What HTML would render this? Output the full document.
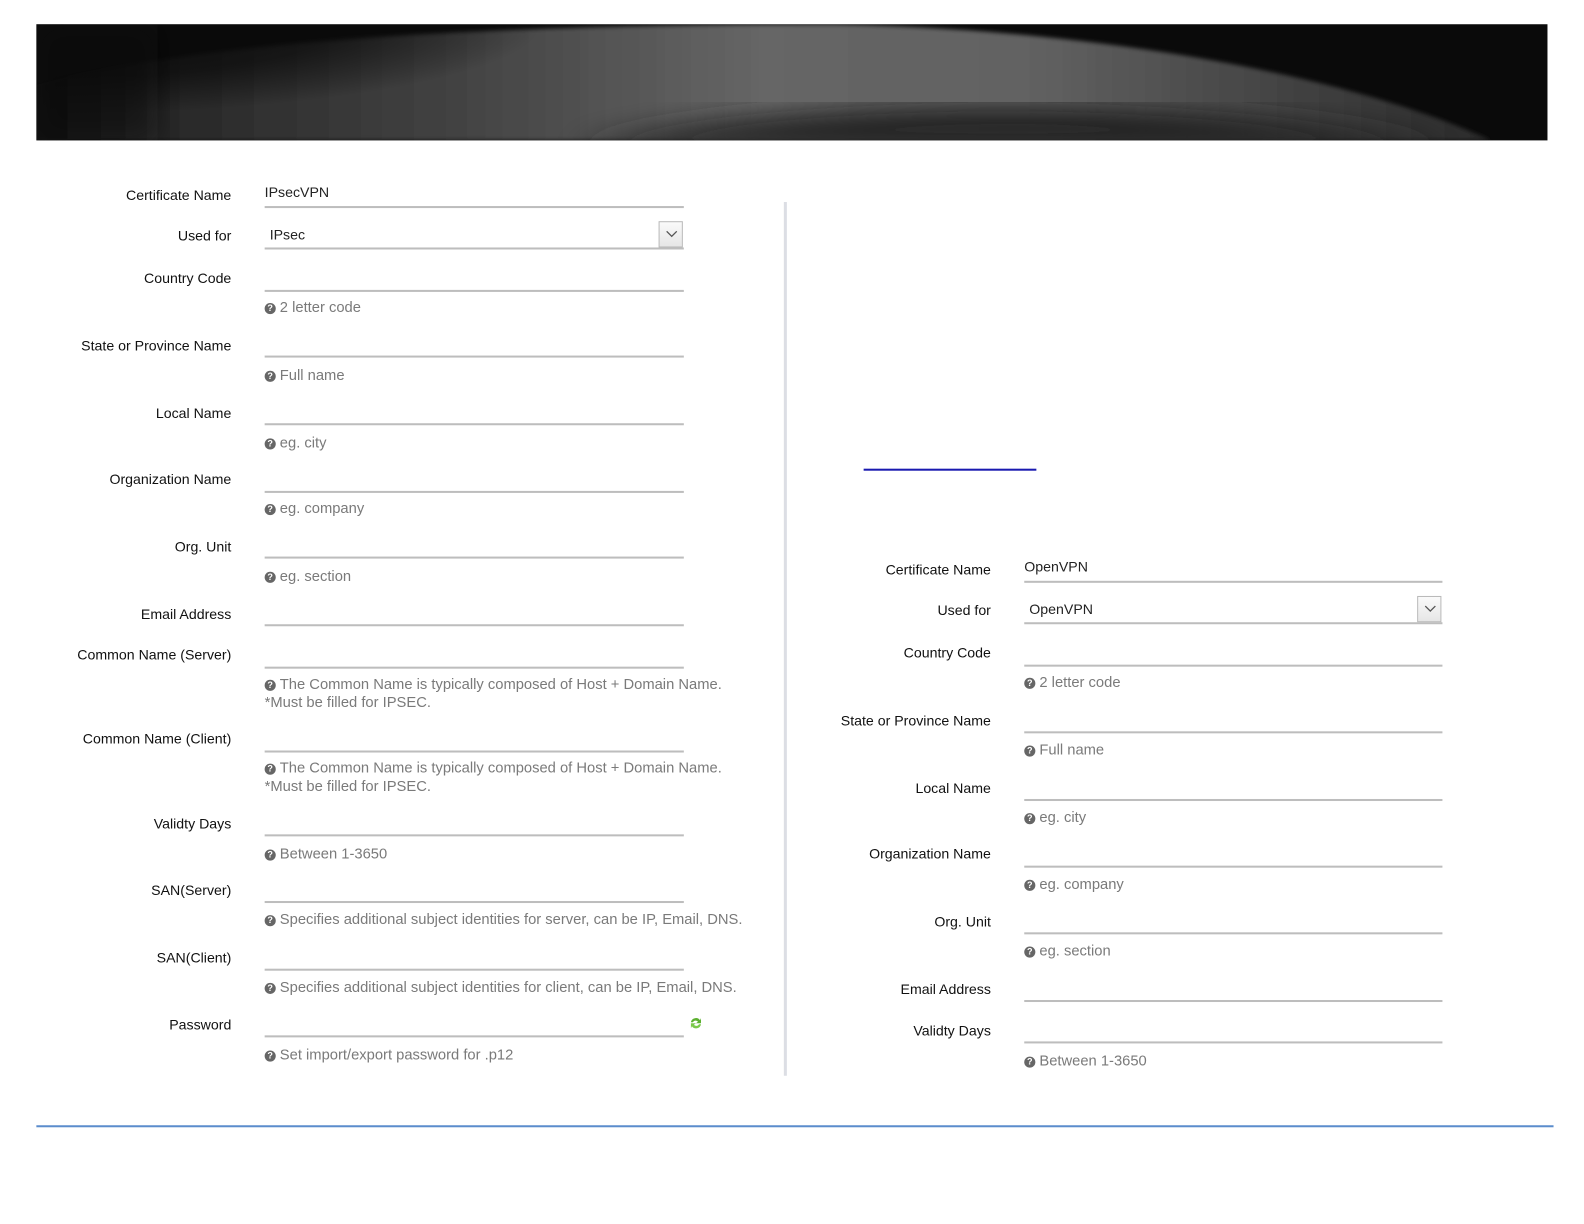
<!DOCTYPE html>
<html><head><meta charset="utf-8">
<style>
html,body{margin:0;padding:0;background:#fff;width:1584px;height:1224px;overflow:hidden}
#w{position:absolute;left:0;top:0;width:1568px;height:1212px;transform:scale(1.0101);transform-origin:0 0;font-family:"Liberation Sans",sans-serif}
.ban{position:absolute;left:36px;top:24px;width:1496px;height:115px;overflow:hidden;background:#0a0a0a}
.l{position:absolute;font-size:14px;color:#111;text-align:right;width:200px;white-space:nowrap}
.ln{position:absolute;height:1.5px;background:#bdbdbd}
.h{position:absolute;font-size:14.6px;color:#7a7a7a;white-space:nowrap;line-height:18px}
.h i{display:inline-block;width:11px;height:11px;border-radius:50%;background:#666;color:#fff;font-style:normal;font-size:9px;line-height:11px;text-align:center;font-weight:bold;margin-right:4px;vertical-align:1px}
.v{position:absolute;font-size:14px;color:#222}
.btn{position:absolute;width:24px;height:26px;border:1px solid #b8b8b8;background:linear-gradient(#fafafa,#e6e6e6);box-sizing:border-box}
.btn svg{position:absolute;left:6px;top:8px}
</style></head><body><div id="w">
<div class="ban">
<svg width="1496" height="115" style="position:absolute;left:0;top:0">
<defs>
<linearGradient id="g" x1="0" y1="0" x2="1" y2="0">
<stop offset="0" stop-color="#0a0a0a"/>
<stop offset="0.08" stop-color="#262626"/>
<stop offset="0.3" stop-color="#444"/>
<stop offset="0.5" stop-color="#666"/>
<stop offset="0.68" stop-color="#626262"/>
<stop offset="0.85" stop-color="#444"/>
<stop offset="1" stop-color="#2a2a2a"/>
</linearGradient>
<radialGradient id="tl" cx="0" cy="0" r="1" gradientUnits="userSpaceOnUse" gradientTransform="translate(0 0) scale(500 90)">
<stop offset="0" stop-color="#0a0a0a" stop-opacity="1"/>
<stop offset="0.6" stop-color="#0a0a0a" stop-opacity="0.7"/>
<stop offset="1" stop-color="#0a0a0a" stop-opacity="0"/>
</radialGradient>
<filter id="b"><feGaussianBlur stdDeviation="14"/></filter>
<filter id="b2"><feGaussianBlur stdDeviation="2"/></filter>
</defs>
<path d="M0 115 L0 60 C150 20 400 0 790 0 C1050 5 1300 50 1440 115 Z" fill="url(#g)" filter="url(#b2)"/>
<rect x="0" y="0" width="600" height="115" fill="url(#tl)"/>
<path d="M530 125 C650 90 850 80 1000 82 C1150 85 1300 100 1400 125 Z" fill="#242424" filter="url(#b)"/>
<rect x="0" y="0" width="120" height="115" fill="#0a0a0a" opacity="0.5" filter="url(#b)"/>
</svg>
</div>

<div style="position:absolute;left:776px;top:200px;width:3px;height:865px;background:#dcdee4"></div>
<div style="position:absolute;left:855px;top:464px;width:171px;height:2px;background:#1a1ab0"></div>
<div style="position:absolute;left:36px;top:1114px;width:1502px;height:2px;background:#5b8ccc"></div>

<!-- LEFT -->
<div class="l" style="left:29px;top:185px">Certificate Name</div>
<div class="v" style="left:262px;top:182px">IPsecVPN</div>
<div class="ln" style="left:262px;top:204px;width:415px"></div>
<div class="l" style="left:29px;top:225px">Used for</div>
<div class="v" style="left:267px;top:224px">IPsec</div>
<div class="ln" style="left:262px;top:245px;width:415px"></div>
<div class="btn" style="left:652px;top:219px"><svg width="12" height="8"><path d="M1 1l5 5 5-5" stroke="#555" stroke-width="1.3" fill="none"/></svg></div>
<div class="l" style="left:29px;top:267px">Country Code</div>
<div class="ln" style="left:262px;top:287px;width:415px"></div>
<div class="h" style="left:262px;top:296px"><i>?</i>2 letter code</div>
<div class="l" style="left:29px;top:334px">State or Province Name</div>
<div class="ln" style="left:262px;top:352px;width:415px"></div>
<div class="h" style="left:262px;top:363px"><i>?</i>Full name</div>
<div class="l" style="left:29px;top:401px">Local Name</div>
<div class="ln" style="left:262px;top:419px;width:415px"></div>
<div class="h" style="left:262px;top:430px"><i>?</i>eg. city</div>
<div class="l" style="left:29px;top:466px">Organization Name</div>
<div class="ln" style="left:262px;top:486px;width:415px"></div>
<div class="h" style="left:262px;top:495px"><i>?</i>eg. company</div>
<div class="l" style="left:29px;top:533px">Org. Unit</div>
<div class="ln" style="left:262px;top:551px;width:415px"></div>
<div class="h" style="left:262px;top:562px"><i>?</i>eg. section</div>
<div class="l" style="left:29px;top:600px">Email Address</div>
<div class="ln" style="left:262px;top:618px;width:415px"></div>
<div class="l" style="left:29px;top:640px">Common Name (Server)</div>
<div class="ln" style="left:262px;top:660px;width:415px"></div>
<div class="h" style="left:262px;top:669px"><i>?</i>The Common Name is typically composed of Host + Domain Name.<br>*Must be filled for IPSEC.</div>
<div class="l" style="left:29px;top:723px">Common Name (Client)</div>
<div class="ln" style="left:262px;top:743px;width:415px"></div>
<div class="h" style="left:262px;top:752px"><i>?</i>The Common Name is typically composed of Host + Domain Name.<br>*Must be filled for IPSEC.</div>
<div class="l" style="left:29px;top:807px">Validty Days</div>
<div class="ln" style="left:262px;top:826px;width:415px"></div>
<div class="h" style="left:262px;top:837px"><i>?</i>Between 1-3650</div>
<div class="l" style="left:29px;top:873px">SAN(Server)</div>
<div class="ln" style="left:262px;top:892px;width:415px"></div>
<div class="h" style="left:262px;top:902px"><i>?</i>Specifies additional subject identities for server, can be IP, Email, DNS.</div>
<div class="l" style="left:29px;top:940px">SAN(Client)</div>
<div class="ln" style="left:262px;top:959px;width:415px"></div>
<div class="h" style="left:262px;top:969px"><i>?</i>Specifies additional subject identities for client, can be IP, Email, DNS.</div>
<div class="l" style="left:29px;top:1006px">Password</div>
<div class="ln" style="left:262px;top:1025px;width:415px"></div>
<svg style="position:absolute;left:682px;top:1006px" width="14" height="14"><path d="M2 6a5 5 0 0 1 9-2l1-2v5h-5l2-1.5a3 3 0 0 0-5 .5z" fill="#5cb030"/><path d="M12 8a5 5 0 0 1-9 2l-1 2V7h5l-2 1.5a3 3 0 0 0 5-.5z" fill="#7ac94a"/></svg>
<div class="h" style="left:262px;top:1036px"><i>?</i>Set import/export password for .p12</div>

<!-- RIGHT -->
<div class="l" style="left:781px;top:556px">Certificate Name</div>
<div class="v" style="left:1014px;top:553px">OpenVPN</div>
<div class="ln" style="left:1014px;top:575px;width:414px"></div>
<div class="l" style="left:781px;top:596px">Used for</div>
<div class="v" style="left:1019px;top:595px">OpenVPN</div>
<div class="ln" style="left:1014px;top:616px;width:414px"></div>
<div class="btn" style="left:1403px;top:590px"><svg width="12" height="8"><path d="M1 1l5 5 5-5" stroke="#555" stroke-width="1.3" fill="none"/></svg></div>
<div class="l" style="left:781px;top:638px">Country Code</div>
<div class="ln" style="left:1014px;top:658px;width:414px"></div>
<div class="h" style="left:1014px;top:667px"><i>?</i>2 letter code</div>
<div class="l" style="left:781px;top:705px">State or Province Name</div>
<div class="ln" style="left:1014px;top:724px;width:414px"></div>
<div class="h" style="left:1014px;top:734px"><i>?</i>Full name</div>
<div class="l" style="left:781px;top:772px">Local Name</div>
<div class="ln" style="left:1014px;top:791px;width:414px"></div>
<div class="h" style="left:1014px;top:801px"><i>?</i>eg. city</div>
<div class="l" style="left:781px;top:837px">Organization Name</div>
<div class="ln" style="left:1014px;top:857px;width:414px"></div>
<div class="h" style="left:1014px;top:867px"><i>?</i>eg. company</div>
<div class="l" style="left:781px;top:904px">Org. Unit</div>
<div class="ln" style="left:1014px;top:923px;width:414px"></div>
<div class="h" style="left:1014px;top:933px"><i>?</i>eg. section</div>
<div class="l" style="left:781px;top:971px">Email Address</div>
<div class="ln" style="left:1014px;top:990px;width:414px"></div>
<div class="l" style="left:781px;top:1012px">Validty Days</div>
<div class="ln" style="left:1014px;top:1031px;width:414px"></div>
<div class="h" style="left:1014px;top:1042px"><i>?</i>Between 1-3650</div>
</div></body></html>
